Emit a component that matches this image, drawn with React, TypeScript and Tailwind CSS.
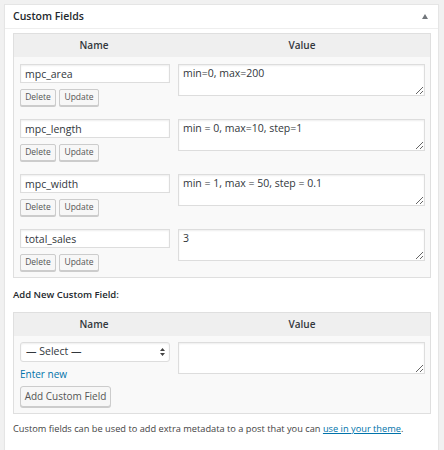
import React from "react";

const rows = [
  { name: "mpc_area", value: "min=0, max=200" },
  { name: "mpc_length", value: "min = 0, max=10, step=1" },
  { name: "mpc_width", value: "min = 1, max = 50, step = 0.1" },
  { name: "total_sales", value: "3" },
];

function SmallButton({ children, w }: { children: React.ReactNode; w: string }) {
  return (
    <button
      className={`h-[17px] ${w} rounded-[2px] border border-[#ccc] bg-[#f7f7f7] text-[8.5px] leading-none text-[#555] shadow-[0_1px_0_#ccc]`}
    >
      {children}
    </button>
  );
}

function TableHead() {
  return (
    <div className="grid h-[23px] grid-cols-[160px_1fr] items-center bg-[#efefef] text-[10px] font-semibold text-[#32373c]">
      <div className="text-center">Name</div>
      <div className="text-center">Value</div>
    </div>
  );
}

export default function App() {
  return (
    <div
      className="h-[450px] w-[444px] bg-[#f1f1f1] pt-1 pl-1"
      style={{ fontFamily: '"Open Sans", "Liberation Sans", sans-serif' }}
    >
      <div className="w-[435px] border border-[#e5e5e5] bg-white pb-[14px] shadow-[0_1px_1px_rgba(0,0,0,0.04)]">
        {/* Header */}
        <div className="flex h-[24px] items-center justify-between border-b border-[#eee] pl-2 pr-[10px]">
          <h2 className="text-[10.5px] font-semibold text-[#23282d]">Custom Fields</h2>
          <svg width="6" height="5" viewBox="0 0 6 5">
            <path d="M3 0 L6 5 L0 5 Z" fill="#72777c" />
          </svg>
        </div>

        <div className="pt-1 pl-2 pr-[7px]">
          {/* Existing fields */}
          <div className="border border-[#dfdfdf] bg-[#f9f9f9]">
            <TableHead />
            {rows.map((r) => (
              <div key={r.name} className="grid grid-cols-[160px_1fr] pt-[7px] pb-[6px]">
                <div className="pl-[6px]">
                  <input
                    readOnly
                    value={r.name}
                    className="block h-[19px] w-[150px] border border-[#ddd] bg-white px-[4px] text-[10.5px] text-[#32373c] shadow-[inset_0_1px_2px_rgba(0,0,0,0.07)] outline-none"
                  />
                  <div className="mt-[6px] flex gap-[3px]">
                    <SmallButton w="w-[36px]">Delete</SmallButton>
                    <SmallButton w="w-[40px]">Update</SmallButton>
                  </div>
                </div>
                <div className="pl-1 pr-[5px]">
                  <textarea
                    readOnly
                    value={r.value}
                    className="block h-[32px] w-full resize-y border border-[#ddd] bg-white px-[4px] pt-[1px] text-[10.5px] leading-[14px] text-[#32373c] shadow-[inset_0_1px_2px_rgba(0,0,0,0.07)] outline-none"
                  />
                </div>
              </div>
            ))}
          </div>

          {/* Add new */}
          <p className="mt-[10px] mb-[10px] text-[9.5px] leading-[14px] font-semibold text-[#23282d]">
            Add New Custom Field:
          </p>
          <div className="border border-[#dfdfdf] bg-[#f9f9f9]">
            <TableHead />
            <div className="grid grid-cols-[160px_1fr] pt-[6px] pb-[6px]">
              <div className="pl-[6px]">
                <div className="relative h-[20px] w-[150px]">
                  <select className="block h-full w-full appearance-none rounded-[3px] border border-[#ddd] bg-white pl-[5px] text-[10.5px] text-[#32373c] shadow-[inset_0_1px_2px_rgba(0,0,0,0.07)] outline-none">
                    <option>— Select —</option>
                  </select>
                  <svg
                    className="pointer-events-none absolute top-[6px] right-[5px]"
                    width="5"
                    height="8"
                    viewBox="0 0 5 8"
                  >
                    <path d="M2.5 0 L5 3 L0 3 Z M0 5 L5 5 L2.5 8 Z" fill="#444" />
                  </svg>
                </div>
                <a className="mt-[5px] block text-[10px] leading-[14px] text-[#0073aa]">Enter new</a>
                <button className="mt-[5px] block h-[21px] w-[91px] rounded-[3px] border border-[#ccc] bg-[#f7f7f7] text-[10px] text-[#555] shadow-[0_1px_0_#ccc]">
                  Add Custom Field
                </button>
              </div>
              <div className="pl-1 pr-[5px]">
                <textarea
                  readOnly
                  className="block h-[32px] w-full resize-y border border-[#ddd] bg-white shadow-[inset_0_1px_2px_rgba(0,0,0,0.07)] outline-none"
                />
              </div>
            </div>
          </div>

          <p className="mt-[8px] text-[9.25px] leading-[14px] text-[#444]">
            Custom fields can be used to add extra metadata to a post that you can{" "}
            <a className="text-[#0073aa] underline">use in your theme</a>.
          </p>
        </div>
      </div>
    </div>
  );
}
